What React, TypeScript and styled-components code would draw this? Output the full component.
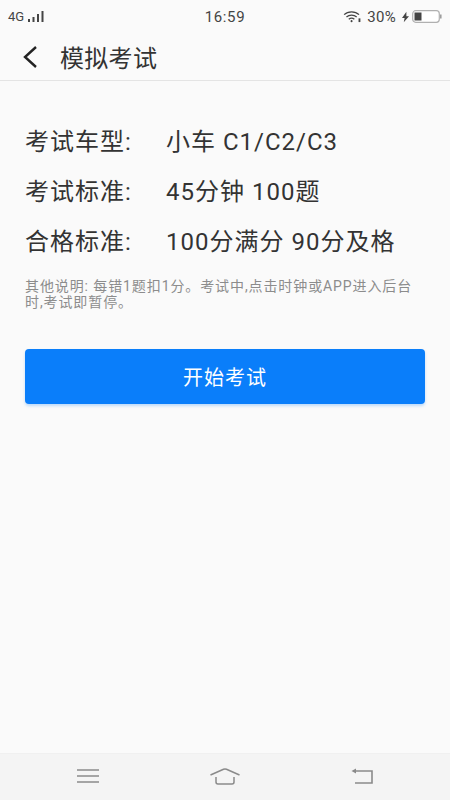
import React from "react";
import styled, { createGlobalStyle } from "styled-components";

const GlobalStyle = createGlobalStyle`
  html, body {
    margin: 0;
    padding: 0;
    background: #fafafa;
  }
  body {
    font-family: "Roboto", "Noto Sans CJK SC", sans-serif;
  }
`;

const Screen = styled.div`
  width: 450px;
  height: 800px;
  display: flex;
  flex-direction: column;
  background: #fafafa;
  overflow: hidden;
`;

const StatusBar = styled.div`
  height: 33px;
  flex-shrink: 0;
  display: grid;
  grid-template-columns: 1fr auto 1fr;
  align-items: center;
  padding: 0 8px;
  box-sizing: border-box;
  color: #444;
`;

const StatusLeft = styled.div`
  display: flex;
  align-items: center;
  gap: 4px;
  font-size: 13px;
`;

const Clock = styled.div`
  font-size: 15px;
  letter-spacing: 0.6px;
`;

const StatusRight = styled.div`
  display: flex;
  align-items: center;
  justify-content: flex-end;
  font-size: 15px;
  letter-spacing: 0.3px;
  padding-right: 0;
`;

const WifiSlot = styled.span`
  display: flex;
  margin-right: 5px;
`;

const BoltSlot = styled.span`
  display: flex;
  margin: 0 3px 0 6px;
`;

const Header = styled.div`
  height: 48px;
  flex-shrink: 0;
  display: flex;
  align-items: center;
  padding-left: 22px;
  gap: 22px;
  border-bottom: 1px solid #e4e4e4;
  box-sizing: border-box;
`;

const Title = styled.div`
  font-size: 24px;
  letter-spacing: 0.3px;
  color: #333;
`;

const Content = styled.div`
  flex: 1;
  padding: 33px 25px 0;
  display: flex;
  flex-direction: column;
`;

const InfoRow = styled.div`
  display: flex;
  align-items: center;
  height: 50px;
  font-size: 24px;
  letter-spacing: 1px;
  color: #333;
`;

const InfoLabel = styled.div`
  width: 141px;
  flex-shrink: 0;
`;

const Note = styled.p`
  margin: 14px 0 0;
  font-size: 14px;
  line-height: 16px;
  letter-spacing: 0.9px;
  color: #8c8c8c;
`;

const StartButton = styled.button`
  margin-top: 39px;
  height: 55px;
  width: 100%;
  flex-shrink: 0;
  border: none;
  border-radius: 4px;
  background: #0a7efa;
  color: #fff;
  font-family: inherit;
  font-size: 20px;
  letter-spacing: 1px;
  box-shadow: 0 2px 3px rgba(10, 126, 250, 0.25);
`;

const NavBar = styled.div`
  height: 47px;
  flex-shrink: 0;
  display: grid;
  grid-template-columns: 77px 22px 111px 30px 111px 22px;
  align-items: center;
  background: #f4f4f4;
  border-top: 1px solid #f0f0f0;
  padding-bottom: 2px;
  box-sizing: border-box;
`;

const NavSlot = styled.div<{ $col: number }>`
  grid-column: ${(p) => p.$col};
  display: flex;
  justify-content: center;
`;

const SignalIcon = () => (
  <svg width="18" height="12" viewBox="0 0 18 12" fill="#444">
    <rect x="0" y="8" width="2" height="3" />
    <rect x="4.500" y="6" width="2" height="5" />
    <rect x="9" y="3" width="2" height="8" />
    <rect x="13.500" y="0" width="2" height="11" />
  </svg>
);

const WifiIcon = () => (
  <svg width="19" height="13" viewBox="0 0 20 14" fill="none" stroke="#444" strokeWidth="1.400">
    <path d="M1 5c4-4 12-4 16 0" />
    <path d="M3.500 7.500c3-2.600 8-2.600 11 0" />
    <path d="M6 10c1.600-1.300 4.400-1.300 6 0" />
    <circle cx="9" cy="12" r="1.100" fill="#444" stroke="none" />
    <path d="M17.500 9v4" strokeWidth="2" />
  </svg>
);

const BoltIcon = () => (
  <svg width="7" height="12" viewBox="0 0 8 12" fill="#444">
    <path d="M5 0 0 7h3l-1 5 6-7H5z" />
  </svg>
);

const BatteryIcon = () => (
  <svg width="30" height="13" viewBox="0 0 30 13">
    <rect x="0.700" y="0.700" width="26.600" height="11.600" rx="3" fill="#fff" stroke="#b0b0b0" strokeWidth="1.200" />
    <rect x="2.500" y="2.500" width="7" height="8" fill="#444" />
    <path d="M28.800 4.500v4" stroke="#999" strokeWidth="1.500" />
  </svg>
);

const BackIcon = () => (
  <svg width="16" height="24" viewBox="0 0 16 24" fill="none" stroke="#222" strokeWidth="2.400">
    <path d="M14 2 3 12l11 10" />
  </svg>
);

const MenuIcon = () => (
  <svg width="22" height="16" viewBox="0 0 22 16" stroke="#8a8a8a" strokeWidth="1.600">
    <path d="M0 2h22M0 8h22M0 14h22" />
  </svg>
);

const HomeIcon = () => (
  <svg width="30" height="17" viewBox="0 0 30 17" fill="none" stroke="#8a8a8a" strokeWidth="1.500">
    <path d="M0.500 7 13.500 1.300q1.500-.6 3 0L29.500 7" />
    <path d="M6 9v5a2 2 0 0 0 2 2h14a2 2 0 0 0 2-2V9" />
  </svg>
);

const ReturnIcon = () => (
  <svg width="22" height="16" viewBox="0 0 22 16" fill="none" stroke="#8a8a8a" strokeWidth="1.600">
    <path d="M3 3h18v12H4" />
    <path d="M0.500 3 5 0.500v5z" fill="#8a8a8a" stroke="none" />
  </svg>
);

const rows = [
  { label: "考试车型:", value: "小车 C1/C2/C3" },
  { label: "考试标准:", value: "45分钟 100题" },
  { label: "合格标准:", value: "100分满分 90分及格" },
];

const App: React.FC = () => {
  return (
    <Screen>
      <GlobalStyle />
      <StatusBar>
        <StatusLeft>
          4G
          <SignalIcon />
        </StatusLeft>
        <Clock>16:59</Clock>
        <StatusRight>
          <WifiSlot>
            <WifiIcon />
          </WifiSlot>
          30%
          <BoltSlot>
            <BoltIcon />
          </BoltSlot>
          <BatteryIcon />
        </StatusRight>
      </StatusBar>
      <Header>
        <BackIcon />
        <Title>模拟考试</Title>
      </Header>
      <Content>
        {rows.map((row) => (
          <InfoRow key={row.label}>
            <InfoLabel>{row.label}</InfoLabel>
            {row.value}
          </InfoRow>
        ))}
        <Note>其他说明: 每错1题扣1分。考试中,点击时钟或APP进入后台时,考试即暂停。</Note>
        <StartButton>开始考试</StartButton>
      </Content>
      <NavBar>
        <NavSlot $col={2}>
          <MenuIcon />
        </NavSlot>
        <NavSlot $col={4}>
          <HomeIcon />
        </NavSlot>
        <NavSlot $col={6}>
          <ReturnIcon />
        </NavSlot>
      </NavBar>
    </Screen>
  );
};

export default App;
